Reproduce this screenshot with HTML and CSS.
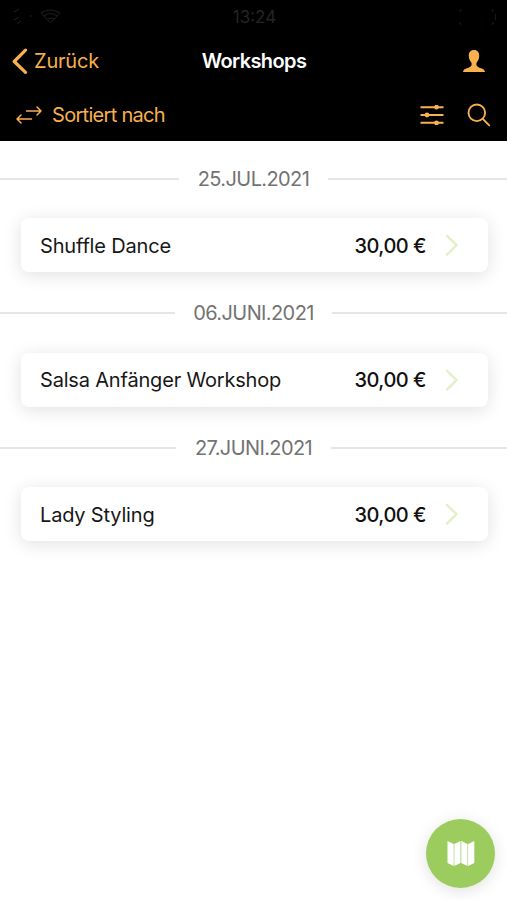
FILE: index.html
```html
<!DOCTYPE html>
<html lang="de">
<head>
<meta charset="utf-8">
<title>Workshops</title>
<link rel="stylesheet" href="styles.css">
</head>
<body>
<header class="header">
  <div class="status">
    <svg class="signal" width="50" height="18" viewBox="0 0 50 18" fill="none" stroke="currentColor"><path d="M2 4l5-3M2 12l5-3M5 16l4-3M18 8h2"/><path d="M29 5q9-6 19 0l-9.500 10zM32 8q7-5 13 0M36 11q3-2 6 0"/></svg>
    <span class="time">13:24</span>
    <svg class="battery" width="38" height="16" viewBox="0 0 38 16" fill="none" stroke="currentColor"><path d="M1 3V1h2M1 13v2h2M32 1h2v2M32 15h2v-2M36.500 5v6"/></svg>
  </div>
  <nav class="nav">
    <a class="back"><svg width="16" height="27" viewBox="0 0 16 27" fill="none" stroke="currentColor" stroke-width="3.200" stroke-linecap="round" stroke-linejoin="round"><path d="M13.500 2.200L2.200 13.500l11.300 10.800"/></svg><span class="back-label">Zurück</span></a>
    <h1 class="title">Workshops</h1>
    <svg class="profile" width="22" height="23" viewBox="0 0 22 23" fill="currentColor"><path d="M11 0C7.400 0 5.600 2.400 5.800 6c.1 2.700 1 4.600 2.200 6.100.6.800.7 1.700.6 2.700-.1 1.300-1 2-2.600 2.600-3.200 1.100-5.500 1.600-6 4.600h22c-.5-3-2.800-3.500-6-4.600-1.600-.6-2.500-1.300-2.600-2.600-.1-1 0-1.900.6-2.700 1.200-1.500 2.100-3.400 2.200-6.100C16.400 2.400 14.600 0 11 0z"/></svg>
  </nav>
  <div class="toolbar">
    <svg width="26" height="18" viewBox="0 0 26 18" fill="none" stroke="currentColor" stroke-width="1.500" stroke-linecap="round" stroke-linejoin="round"><path d="M10.500 5h14.500M21 1l4 4-4 4M15.500 13H1M5 9l-4 4 4 4"/></svg>
    <span class="sort">Sortiert nach</span>
    <svg class="filter" width="24" height="20" viewBox="0 0 24 20" stroke="currentColor" stroke-width="2" fill="currentColor"><path d="M.5 2.200h23M.5 10h23M.5 17.800h23"/><g stroke="none"><circle cx="16.500" cy="2.200" r="2.400"/><circle cx="7" cy="10" r="2.400"/><circle cx="16.500" cy="17.800" r="2.400"/></g></svg>
    <svg class="search" width="24" height="24" viewBox="0 0 24 24" fill="none" stroke="currentColor" stroke-width="1.900" stroke-linecap="round"><circle cx="9.800" cy="9.800" r="8.300"/><path d="M15.800 15.900l6.400 6.400"/></svg>
  </div>
</header>
<main class="list">
  <section class="group">
    <h2 class="date"><span class="date-label">25.JUL.2021</span></h2>
    <a class="card"><span class="name">Shuffle Dance</span><span class="price">30,00 €</span><svg class="chevron" width="14" height="24" viewBox="0 0 14 24"><path d="M2 2.800l9.500 9.400L2 21.600"/></svg></a>
  </section>
  <section class="group">
    <h2 class="date"><span class="date-label">06.JUNI.2021</span></h2>
    <a class="card"><span class="name">Salsa Anfänger Workshop</span><span class="price">30,00 €</span><svg class="chevron" width="14" height="24" viewBox="0 0 14 24"><path d="M2 2.800l9.500 9.400L2 21.600"/></svg></a>
  </section>
  <section class="group">
    <h2 class="date"><span class="date-label">27.JUNI.2021</span></h2>
    <a class="card"><span class="name">Lady Styling</span><span class="price">30,00 €</span><svg class="chevron" width="14" height="24" viewBox="0 0 14 24"><path d="M2 2.800l9.500 9.400L2 21.600"/></svg></a>
  </section>
</main>
<button class="fab" aria-label="Karte"><svg width="28" height="27" viewBox="0 0 28 27" fill="#fff"><path d="M.5 1l6.200 3v22l-6.200-3zM7.300 4l6.200-3v22l-6.200 3zM14.300 1l6.200 3v22l-6.200-3zM21.100 4l6.200-3v22l-6.200 3z"/></svg></button>
</body>
</html>
```
FILE: styles.css
```css
* { box-sizing: border-box; }
body {
  margin: 0;
  height: 900px;
  background: #fff;
  color: #171717;
  font-family: Inter, "Liberation Sans", sans-serif;
  font-size: 20px;
  white-space: nowrap;
  overflow: hidden;
}
h1, h2 { margin: 0; font-size: inherit; }
svg { flex: none; display: block; }
.header { height: 141px; background: #000; color: #f9b04e; }
.status {
  height: 34px;
  padding: 0 10px 0 12px;
  display: grid;
  grid-template-columns: 1fr auto 1fr;
  align-items: center;
  color: #202020;
}
.time { font-size: 17px; color: #242424; }
.battery { justify-self: end; color: #28130f; }
.nav {
  height: 54px;
  padding: 0 22px 0 12px;
  display: grid;
  grid-template-columns: 1fr auto 1fr;
  align-items: center;
}
.back { display: flex; align-items: center; gap: 6px; }
.back-label { letter-spacing: -0.2px; }
.title { color: #fff; font-weight: 600; letter-spacing: -0.6px; padding-left: 11px; }
.profile { justify-self: end; }
.toolbar {
  height: 53px;
  padding: 0 16px 0 16px;
  display: flex;
  align-items: center;
}
.sort { margin-left: 10px; letter-spacing: -0.7px; }
.filter { margin-left: auto; }
.search { margin-left: 23px; }
.group { height: 134.5px; padding-top: 20px; }
.date {
  height: 35px;
  display: flex;
  align-items: center;
  gap: 18.500px;
  color: #737373;
  font-weight: 400;
}
.date::before, .date::after { content: ""; flex: 1; height: 2px; background: #e5e5e5; }
.date-label { letter-spacing: -0.6px; }
.card {
  height: 54px;
  margin: 22px 19px 0 21px;
  padding: 0 29px 0 19px;
  display: flex;
  align-items: center;
  border-radius: 8px;
  background: #fff;
  box-shadow: 0 3px 18px rgba(0, 0, 0, .12);
}
.name, .price { padding-top: 1px; }
.name { letter-spacing: -0.18px; }
.price { margin-left: auto; color: #111; font-weight: 500; letter-spacing: -0.5px; }
.chevron { margin-left: 19px; fill: none; stroke: #e3efc9; stroke-width: 2.400; stroke-linecap: round; stroke-linejoin: round; }
.fab {
  position: absolute;
  left: 426px;
  top: 819px;
  width: 69px;
  height: 69px;
  padding: 0;
  border: 0;
  border-radius: 50%;
  display: grid;
  place-items: center;
  background: #9dcc5e;
  box-shadow: 0 3px 16px rgba(0, 0, 0, .12);
}
```
